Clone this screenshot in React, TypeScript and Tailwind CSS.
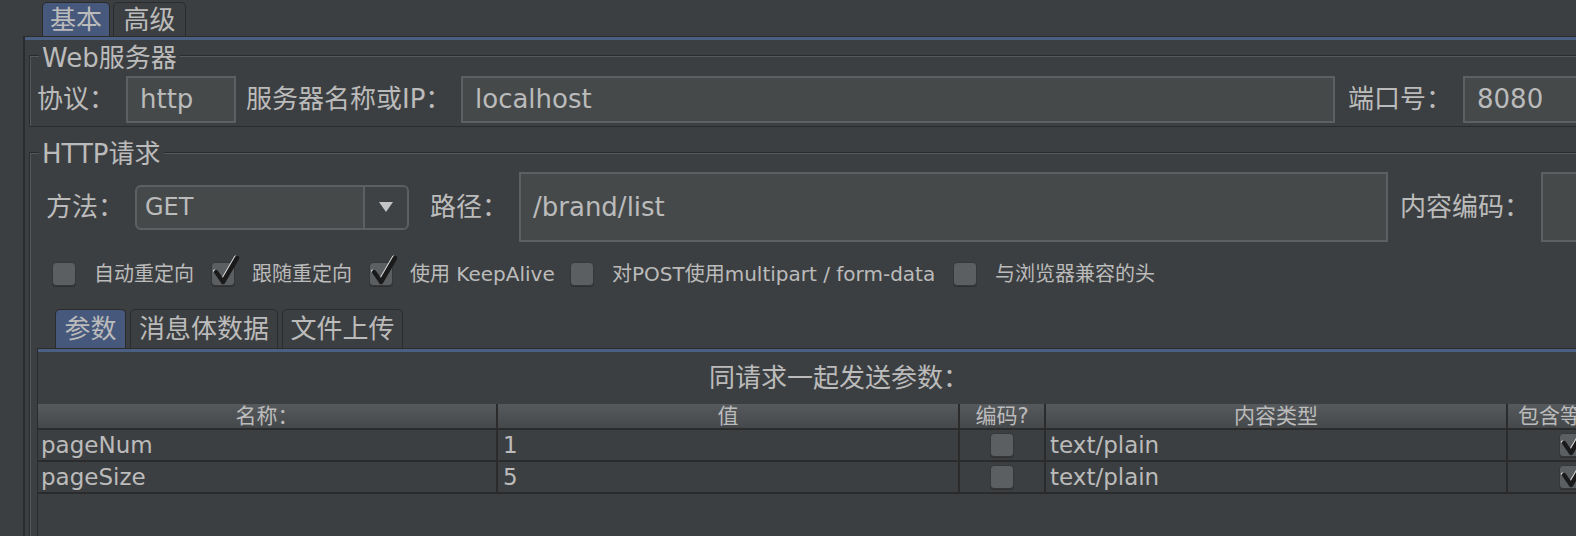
import React from 'react'

const font = "font-['DejaVu_Sans','Noto_Sans_CJK_SC',sans-serif]"

function Check({ checked }: { checked?: boolean }) {
  return (
    <div className="relative w-[24px] h-[24px] shrink-0 rounded-[4px] bg-[#5c5f61] border border-[#353738] shadow-[0_1px_0_#2e3031]">
      {checked && (
        <svg
          className="absolute left-0 -top-[8px] overflow-visible"
          width="28"
          height="32"
          viewBox="0 0 28 32"
        >
          <path d="M4 17 L11 27 L25 3" fill="none" stroke="#dcdcdc" strokeWidth="3" strokeLinecap="round" strokeLinejoin="round" transform="translate(-1.5,-1)" />
          <path d="M4 17 L11 27 L25 3" fill="none" stroke="#1a1a1a" strokeWidth="4.5" strokeLinecap="round" strokeLinejoin="round" />
        </svg>
      )}
    </div>
  )
}

function Tab({ label, active, w }: { label: string; active?: boolean; w: string }) {
  return (
    <div
      className={`${w} h-full flex items-center justify-center rounded-t-[5px] border border-b-0 border-[#2b2b2b] text-[26px] leading-none text-[#bbbbbb] ${
        active ? 'bg-[#46587b]' : 'bg-[#3c3f41]'
      }`}
    >
      {label}
    </div>
  )
}

function Input({ w, h, value }: { w: string; h: string; value?: string }) {
  return (
    <div className={`${w} ${h} shrink-0 flex items-center pl-[12px] bg-[#45494a] border-2 border-[#5d6062] text-[26px] text-[#bbbbbb]`}>
      {value}
    </div>
  )
}

const params = [
  { name: 'pageNum', value: '1' },
  { name: 'pageSize', value: '5' },
]

export default function App() {
  return (
    <div className={`w-[1576px] h-[536px] overflow-hidden bg-[#3c3f41] text-[#bbbbbb] ${font}`}>
      {/* Top tabs */}
      <div className="flex h-[36px] pt-[2px] pl-[42px] gap-[3px]">
        <Tab label="基本" active w="w-[68px]" />
        <Tab label="高级" w="w-[73px]" />
      </div>

      {/* Outer panel */}
      <div className="ml-[23px] w-[1720px] border-l-2 border-t border-[#2b2b2b]">
        <div className="h-[3px] bg-[#4b5e84]" />
        <div className="pl-[4px]">
          {/* Web server */}
          <fieldset className="w-[1700px] border border-[#2b2b2b] shadow-[inset_1px_1px_0_#56595b] pb-[3px]">
            <legend className="ml-[9px] px-[3px] text-[26px] leading-[30px] bg-[#3c3f41]">
              <span className="relative top-[3px]">Web服务器</span>
            </legend>
            <div className="flex items-center h-[47px] mt-[6px] text-[26px]">
              <span className="ml-[7px] w-[89px] shrink-0">协议：</span>
              <Input w="w-[110px]" h="h-[47px]" value="http" />
              <span className="ml-[10px] w-[215px] shrink-0">服务器名称或IP：</span>
              <Input w="w-[874px]" h="h-[47px]" value="localhost" />
              <span className="ml-[13px] w-[115px] shrink-0">端口号：</span>
              <Input w="w-[200px]" h="h-[47px]" value="8080" />
            </div>
          </fieldset>

          {/* HTTP request */}
          <fieldset className="mt-[10px] w-[1700px] h-[420px] border border-[#2b2b2b] shadow-[inset_1px_1px_0_#56595b]">
            <legend className="ml-[9px] px-[3px] text-[26px] leading-[30px] bg-[#3c3f41]">
              <span className="relative top-[2px]">HTTP请求</span>
            </legend>
            <div className="flex items-center h-[70px] mt-[5px] text-[26px]">
              <span className="ml-[16px] w-[89px] shrink-0">方法：</span>
              <div className="w-[274px] h-[45px] shrink-0 flex rounded-[6px] border-2 border-[#5d6062] bg-[#45494a] overflow-hidden">
                <div className="flex-1 flex items-center pl-[8px] text-[24px]">GET</div>
                <div className="w-[44px] flex items-center justify-center border-l-2 border-[#5d6062] bg-[#3f4244]">
                  <svg width="14" height="10" viewBox="0 0 14 10">
                    <path d="M0 0 H14 L7 10 Z" fill="#c4c4c4" />
                  </svg>
                </div>
              </div>
              <span className="ml-[21px] w-[89px] shrink-0">路径：</span>
              <Input w="w-[869px]" h="h-[70px]" value="/brand/list" />
              <span className="ml-[12px] w-[141px] shrink-0">内容编码：</span>
              <Input w="w-[200px]" h="h-[70px]" />
            </div>

            {/* Checkboxes */}
            <div className="flex items-center h-[28px] mt-[18px] text-[20px]">
              <div className="ml-[22px]"><Check /></div>
              <span className="ml-[18px] w-[117px] shrink-0">自动重定向</span>
              <Check checked />
              <span className="ml-[17px] w-[117px] shrink-0">跟随重定向</span>
              <Check checked />
              <span className="ml-[17px] w-[160px] shrink-0">使用 KeepAlive</span>
              <Check />
              <span className="ml-[18px] w-[341px] shrink-0">对POST使用multipart / form-data</span>
              <Check />
              <span className="ml-[18px] shrink-0">与浏览器兼容的头</span>
            </div>

            {/* Inner tabs */}
            <div className="ml-[7px] mt-[21px]">
              <div className="flex h-[39px] pl-[18px] gap-[4px]">
                <Tab label="参数" active w="w-[71px]" />
                <Tab label="消息体数据" w="w-[148px]" />
                <Tab label="文件上传" w="w-[121px]" />
              </div>
              <div className="w-[1640px] h-[300px] border-l border-t border-[#2b2b2b]">
                <div className="h-[3px] bg-[#4b5e84]" />
                <div className="w-[1602px] h-[52px] flex items-center justify-center text-[26px]">同请求一起发送参数：</div>

                {/* Table */}
                <div className="flex h-[26px] bg-linear-to-b from-[#565a5d] to-[#45484a] border-b-2 border-[#2b2b2b] text-[21px] leading-none">
                  <div className="w-[460px] flex items-center justify-center border-r-2 border-[#2b2b2b]">名称：</div>
                  <div className="w-[462px] flex items-center justify-center border-r-2 border-[#2b2b2b]">值</div>
                  <div className="w-[86px] flex items-center justify-center border-r-2 border-[#2b2b2b]">编码?</div>
                  <div className="w-[462px] flex items-center justify-center border-r-2 border-[#2b2b2b]">内容类型</div>
                  <div className="w-[125px] flex items-center justify-center">包含等于？</div>
                </div>
                {params.map((p) => (
                  <div key={p.name} className="flex h-[32px] border-b-2 border-[#2b2b2b] text-[23px]">
                    <div className="w-[460px] flex items-center pl-[3px] border-r-2 border-[#2b2b2b]">{p.name}</div>
                    <div className="w-[462px] flex items-center pl-[5px] border-r-2 border-[#2b2b2b]">{p.value}</div>
                    <div className="w-[86px] flex items-center justify-center border-r-2 border-[#2b2b2b]">
                      <Check />
                    </div>
                    <div className="w-[462px] flex items-center pl-[4px] border-r-2 border-[#2b2b2b]">text/plain</div>
                    <div className="w-[125px] flex items-center justify-center">
                      <Check checked />
                    </div>
                  </div>
                ))}
              </div>
            </div>
          </fieldset>
        </div>
      </div>
    </div>
  )
}
